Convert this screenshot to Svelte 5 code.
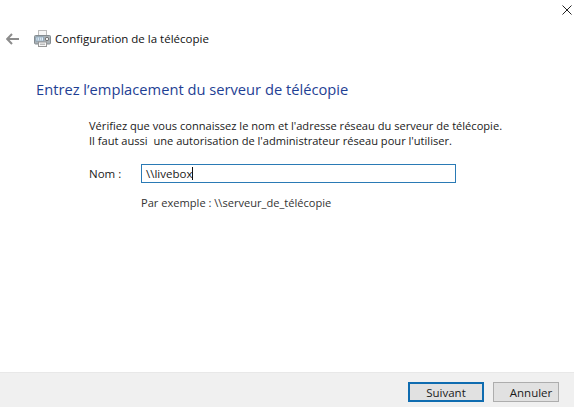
<script>
  let name = "\\\\livebox";
</script>

<div class="wizard">
  <div class="close-row">
    <svg width="10" height="10" viewBox="0 0 10 10" aria-label="Fermer"><path d="M0.5 0.5 L9.5 9.5 M9.5 0.5 L0.5 9.5" stroke="#222" stroke-width="1" fill="none" /></svg>
  </div>

  <div class="title-row">
    <svg class="back" width="13" height="12" viewBox="0 0 13 12"><path d="M6 1 L1.2 6 L6 11 M1.5 6 H13" stroke="#8c8c8c" stroke-width="2" fill="none" /></svg>
    <svg class="fax" width="17" height="17" viewBox="0 0 17 17">
      <rect x="4.5" y="0.5" width="8" height="6" fill="#f7f7f7" stroke="#bdbdbd" />
      <rect x="0.5" y="5.5" width="16" height="8.5" rx="1" fill="#aab2b7" stroke="#858c91" />
      <rect x="2" y="7" width="7.5" height="4" fill="#e4eef6" stroke="#6d8ea8" stroke-width="0.6" />
      <path d="M3.2 8.2 H8.3 M3.2 9.8 H8.3" stroke="#6d8ea8" stroke-width="0.8" stroke-dasharray="1 0.8" />
      <circle cx="13" cy="9" r="1.7" fill="#eeeeee" stroke="#5f5f5f" stroke-width="0.8" />
      <rect x="4.5" y="12" width="8" height="4.5" fill="#f7f7f7" stroke="#979797" />
      <path d="M6 14.2 H11" stroke="#8a8a8a" stroke-width="0.8" />
    </svg>
    <span class="title">Configuration de la télécopie</span>
  </div>

  <main class="content">
    <h1>Entrez l’emplacement du serveur de télécopie</h1>
    <p class="intro">
      Vérifiez que vous connaissez le nom et l'adresse réseau du serveur de télécopie.<br />
      Il faut aussi&nbsp; une autorisation de l'administrateur réseau pour l'utiliser.
    </p>
    <div class="field">
      <label for="nom">Nom :</label>
      <div class="input-box">
        <span class="value" id="nom">{name}</span><span class="caret"></span>
      </div>
    </div>
    <p class="hint">Par exemple : \\serveur_de_télécopie</p>
  </main>

  <footer>
    <button class="primary">Suivant</button>
    <button class="cancel">Annuler</button>
  </footer>
</div>

<style>
  :global(body) {
    margin: 0;
    background: #fff;
  }

  .wizard {
    width: 574px;
    height: 407px;
    display: flex;
    flex-direction: column;
    font-family: "Open Sans", "Noto Sans", sans-serif;
    font-size: 11.1px;
    color: #1a1a1a;
    overflow: hidden;
  }

  .close-row {
    height: 30px;
    display: flex;
    justify-content: flex-end;
    align-items: flex-start;
    padding: 5px 2px 0 0;
    box-sizing: border-box;
  }

  .title-row {
    height: 17px;
    display: flex;
    align-items: center;
    padding-left: 6px;
  }

  .back {
    margin-right: 15px;
  }

  .fax {
    margin-right: 4px;
  }

  .title {
    font-size: 11.5px;
    color: #111;
  }

  .content {
    flex: 1;
    padding: 0 0 0 36px;
  }

  h1 {
    margin: 32px 0 0;
    font-size: 14.7px;
    line-height: 20px;
    font-weight: 400;
    color: #1f3f94;
  }

  .intro {
    margin: 19px 0 0 53px;
    line-height: 15px;
  }

  .field {
    display: flex;
    align-items: center;
    margin: 16px 0 0 53px;
  }

  label {
    width: 52px;
    font-size: 11.5px;
  }

  .input-box {
    width: 309px;
    height: 17px;
    border: 1px solid #2a7ab5;
    display: flex;
    align-items: center;
    padding-left: 4px;
    font-size: 11.5px;
  }

  .caret {
    width: 1px;
    height: 13px;
    background: #111;
  }

  .hint {
    margin: 12px 0 0 105px;
    line-height: 15px;
    color: #333;
  }

  footer {
    height: 35px;
    background: #f0f0f0;
    border-top: 1px solid #e8e8e8;
    display: flex;
    justify-content: flex-end;
    align-items: flex-start;
    gap: 9px;
    padding: 9px 15px 0 0;
    box-sizing: border-box;
  }

  button {
    width: 66px;
    height: 20px;
    padding: 0;
    font: inherit;
    font-size: 11.5px;
    color: #1a1a1a;
    background: #e1e1e1;
    border: 1px solid #adadad;
  }

  .primary {
    width: 76px;
    border: 2px solid #0f6cb0;
  }

  .cancel {
    padding-left: 10px;
  }
</style>
